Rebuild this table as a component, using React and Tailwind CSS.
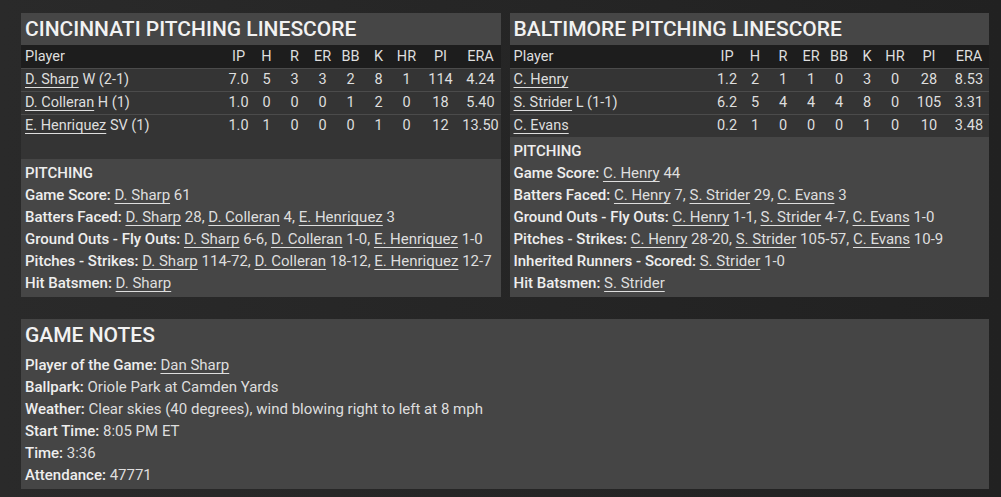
const cincyRows = [
  { name: "D. Sharp", note: "W (2-1)", s: ["7.0", "5", "3", "3", "2", "8", "1", "114", "4.24"] },
  { name: "D. Colleran", note: "H (1)", s: ["1.0", "0", "0", "0", "1", "2", "0", "18", "5.40"] },
  { name: "E. Henriquez", note: "SV (1)", s: ["1.0", "1", "0", "0", "0", "1", "0", "12", "13.50"] },
]

const balRows = [
  { name: "C. Henry", note: "", s: ["1.2", "2", "1", "1", "0", "3", "0", "28", "8.53"] },
  { name: "S. Strider", note: "L (1-1)", s: ["6.2", "5", "4", "4", "4", "8", "0", "105", "3.31"] },
  { name: "C. Evans", note: "", s: ["0.2", "1", "0", "0", "0", "1", "0", "10", "3.48"] },
]

const cols = ["IP", "H", "R", "ER", "BB", "K", "HR", "PI", "ERA"]
const colW = ["w-[28px]", "w-[28px]", "w-[28px]", "w-[28px]", "w-[28px]", "w-[28px]", "w-[28px]", "w-[40px]", "w-[40px]"]

const cincyPitching = [
  ["Game Score:", [["D. Sharp", " 61"]]],
  ["Batters Faced:", [["D. Sharp", " 28, "], ["D. Colleran", " 4, "], ["E. Henriquez", " 3"]]],
  ["Ground Outs - Fly Outs:", [["D. Sharp", " 6-6, "], ["D. Colleran", " 1-0, "], ["E. Henriquez", " 1-0"]]],
  ["Pitches - Strikes:", [["D. Sharp", " 114-72, "], ["D. Colleran", " 18-12, "], ["E. Henriquez", " 12-7"]]],
  ["Hit Batsmen:", [["D. Sharp", ""]]],
]

const balPitching = [
  ["Game Score:", [["C. Henry", " 44"]]],
  ["Batters Faced:", [["C. Henry", " 7, "], ["S. Strider", " 29, "], ["C. Evans", " 3"]]],
  ["Ground Outs - Fly Outs:", [["C. Henry", " 1-1, "], ["S. Strider", " 4-7, "], ["C. Evans", " 1-0"]]],
  ["Pitches - Strikes:", [["C. Henry", " 28-20, "], ["S. Strider", " 105-57, "], ["C. Evans", " 10-9"]]],
  ["Inherited Runners - Scored:", [["S. Strider", " 1-0"]]],
  ["Hit Batsmen:", [["S. Strider", ""]]],
]

function Link({ children }) {
  return <span className="underline underline-offset-[3px] decoration-1">{children}</span>
}

function Linescore({ title, rows, pitching }) {
  return (
    <div className="flex flex-col">
      <div className="h-[32px] bg-[#464646] px-[4px] flex items-center text-[21px] font-medium text-[#f2f2f2] leading-none">
        {title}
      </div>
      <div className="flex-1 bg-[#343434]">
        <div className="h-[23px] bg-[#1d1d1d] flex items-center pl-[4px] text-[14.5px] text-[#dedede]">
          <div className="flex-1">Player</div>
          {cols.map((c, i) => (
            <div key={c} className={`${colW[i]} text-center`}>{c}</div>
          ))}
        </div>
        {rows.map((r) => (
          <div key={r.name} className="h-[23px] border-t border-[#4b4b4b] flex items-center pl-[4px] text-[14.5px] text-[#dedede]">
            <div className="flex-1">
              <Link>{r.name}</Link>
              {r.note && <span> {r.note}</span>}
            </div>
            {r.s.map((v, i) => (
              <div key={i} className={`${colW[i]} text-center`}>{v}</div>
            ))}
          </div>
        ))}
      </div>
      <div className="bg-[#464646] px-[4px] py-[3px] text-[15px] leading-[22px] text-[#dedede]">
        <div className="font-medium text-[#eeeeee]">PITCHING</div>
        {pitching.map(([label, items]) => (
          <div key={label} className="whitespace-nowrap">
            <span className="font-medium text-[#eeeeee]">{label}</span>{" "}
            {items.map(([n, t], i) => (
              <span key={i}>
                <Link>{n}</Link>
                {t}
              </span>
            ))}
          </div>
        ))}
      </div>
    </div>
  )
}

const notes = [
  ["Player of the Game:", <Link>Dan Sharp</Link>],
  ["Ballpark:", "Oriole Park at Camden Yards"],
  ["Weather:", "Clear skies (40 degrees), wind blowing right to left at 8 mph"],
  ["Start Time:", "8:05 PM ET"],
  ["Time:", "3:36"],
  ["Attendance:", "47771"],
]

export default function App() {
  return (
    <div
      className="min-h-[497px] w-[1001px] bg-gradient-to-r from-[#2a2a2a] to-[#212121] pt-[13px] pl-[21px] pr-[12px] pb-[8px]"
      style={{ fontFamily: "Roboto, 'Liberation Sans', sans-serif" }}
    >
      <div className="grid grid-cols-2 gap-[9px]">
        <Linescore title="CINCINNATI PITCHING LINESCORE" rows={cincyRows} pitching={cincyPitching} />
        <Linescore title="BALTIMORE PITCHING LINESCORE" rows={balRows} pitching={balPitching} />
      </div>
      <div className="mt-[22px] bg-[#454545]">
        <div className="h-[32px] px-[4px] flex items-center text-[21px] font-medium text-[#f2f2f2] leading-none">
          GAME NOTES
        </div>
        <div className="px-[4px] py-[3px] text-[15px] leading-[22px] text-[#dedede]">
          {notes.map(([label, val]) => (
            <div key={label}>
              <span className="font-medium text-[#eeeeee]">{label}</span> {val}
            </div>
          ))}
        </div>
      </div>
    </div>
  )
}
